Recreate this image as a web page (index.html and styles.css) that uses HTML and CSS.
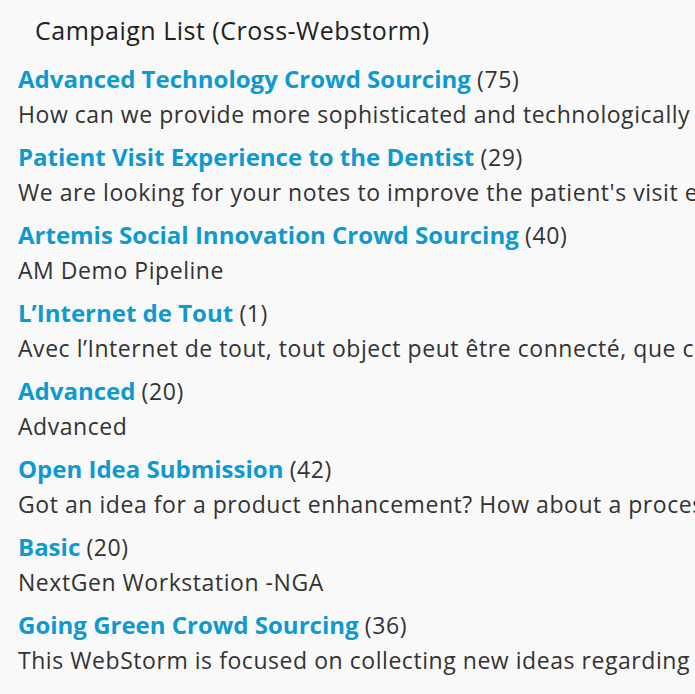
FILE: index.html
```html
<!DOCTYPE html>
<html lang="en">
<head>
<meta charset="utf-8">
<title>Campaign List</title>
<link rel="stylesheet" href="styles.css">
</head>
<body>
<div class="panel">
  <h2 class="panel-title">Campaign List (Cross-Webstorm)</h2>
  <ul class="campaigns">
    <li class="campaign">
      <div class="campaign-head"><a class="campaign-name" href="#">Advanced Technology Crowd Sourcing</a> <span class="count">(75)</span></div>
      <div class="campaign-desc">How can we provide more sophisticated and technologically advanced solutions to our customers?</div>
    </li>
    <li class="campaign">
      <div class="campaign-head"><a class="campaign-name" href="#">Patient Visit Experience to the Dentist</a> <span class="count">(29)</span></div>
      <div class="campaign-desc">We are looking for your notes to improve the patient's visit experience at the dentist.</div>
    </li>
    <li class="campaign">
      <div class="campaign-head"><a class="campaign-name" href="#">Artemis Social Innovation Crowd Sourcing</a> <span class="count">(40)</span></div>
      <div class="campaign-desc">AM Demo Pipeline</div>
    </li>
    <li class="campaign">
      <div class="campaign-head"><a class="campaign-name" href="#">L’Internet de Tout</a> <span class="count">(1)</span></div>
      <div class="campaign-desc">Avec l’Internet de tout, tout object peut être connecté, que ce soit une voiture ou une maison.</div>
    </li>
    <li class="campaign">
      <div class="campaign-head"><a class="campaign-name" href="#">Advanced</a> <span class="count">(20)</span></div>
      <div class="campaign-desc">Advanced</div>
    </li>
    <li class="campaign">
      <div class="campaign-head"><a class="campaign-name" href="#">Open Idea Submission</a> <span class="count">(42)</span></div>
      <div class="campaign-desc">Got an idea for a product enhancement? How about a process improvement? Share it here.</div>
    </li>
    <li class="campaign">
      <div class="campaign-head"><a class="campaign-name" href="#">Basic</a> <span class="count">(20)</span></div>
      <div class="campaign-desc">NextGen Workstation -NGA</div>
    </li>
    <li class="campaign">
      <div class="campaign-head"><a class="campaign-name" href="#">Going Green Crowd Sourcing</a> <span class="count">(36)</span></div>
      <div class="campaign-desc">This WebStorm is focused on collecting new ideas regarding ways to reduce our footprint.</div>
    </li>
    <li class="campaign">
      <div class="campaign-head"><a class="campaign-name" href="#">Innovation Challenge</a> <span class="count">(12)</span></div>
      <div class="campaign-desc">Share your boldest ideas for the year ahead.</div>
    </li>
  </ul>
</div>
</body>
</html>
```

FILE: styles.css
```css
html, body {
  margin: 0;
  padding: 0;
  overflow: hidden;
  background: #f9f9f9;
}
body {
  font-family: "Open Sans", "Liberation Sans", sans-serif;
  color: #333333;
  width: 695px;
  height: 694px;
}
.panel {
  padding: 13px 0 0 18px;
}
.panel-title {
  margin: 0 0 15px 17px;
  font-size: 25px;
  font-weight: 400;
  line-height: 34px;
  letter-spacing: 0.5px;
  color: #222222;
  white-space: nowrap;
}
.campaigns {
  list-style: none;
  margin: 0;
  padding: 0;
}
.campaign {
  margin: 0 0 8px 0;
  white-space: nowrap;
}
.campaign-head {
  font-size: 24px;
  line-height: 34px;
}
.campaign-name {
  color: #0e9ad0;
  font-weight: 700;
  text-decoration: none;
}
.count {
  color: #333333;
  font-size: 23px;
  letter-spacing: 0.6px;
}
.campaign-desc {
  font-size: 23px;
  line-height: 36px;
  letter-spacing: 0.55px;
  color: #333333;
}
```
